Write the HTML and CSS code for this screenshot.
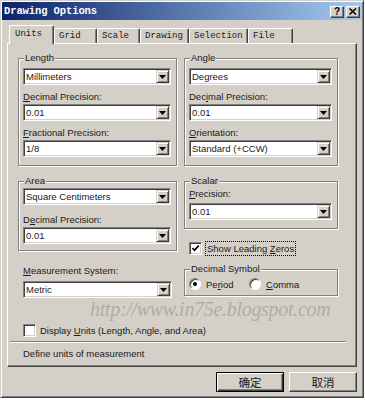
FILE: index.html
```html
<!DOCTYPE html>
<html lang="en">
<head>
    <meta charset="UTF-8">
    <meta name="viewport" content="width=device-width, initial-scale=1.0">
    <title>Drawing Options</title>
    <link rel="stylesheet" href="styles.css">
</head>
<body>

<div class="window">
    <div class="titlebar">
        <span class="title">Drawing Options</span>
        <div class="caption">
            <span class="cap-btn">?</span>
            <span class="cap-btn">
                <svg width="8" height="7" viewBox="0 0 8 7"><path d="M0.5 0.5 L7 6.5 M7 0.5 L0.5 6.5" stroke="#000" stroke-width="1.5"/></svg>
            </span>
        </div>
    </div>

    <div class="tabs">
        <div class="tab active tab-units">Units</div>
        <div class="tab tab-grid">Grid</div>
        <div class="tab tab-scale">Scale</div>
        <div class="tab tab-drawing">Drawing</div>
        <div class="tab tab-selection">Selection</div>
        <div class="tab tab-file">File</div>
    </div>

    <div class="panel">
        <div class="cols">
            <!-- row 1 -->
            <div class="group g-length">
                <div class="group-title">Length</div>
                <div class="combo first"><span class="combo-text">Millimeters</span><span class="combo-btn"><svg width="7" height="4"><polygon points="0,0 7,0 3.5,4" fill="#000"/></svg></span></div>
                <div class="lbl"><u>D</u>ecimal Precision:</div>
                <div class="combo"><span class="combo-text">0.01</span><span class="combo-btn"><svg width="7" height="4"><polygon points="0,0 7,0 3.5,4" fill="#000"/></svg></span></div>
                <div class="lbl"><u>F</u>ractional Precision:</div>
                <div class="combo"><span class="combo-text">1/8</span><span class="combo-btn"><svg width="7" height="4"><polygon points="0,0 7,0 3.5,4" fill="#000"/></svg></span></div>
            </div>
            <div class="group g-angle">
                <div class="group-title">Angle</div>
                <div class="combo first"><span class="combo-text">Degrees</span><span class="combo-btn"><svg width="7" height="4"><polygon points="0,0 7,0 3.5,4" fill="#000"/></svg></span></div>
                <div class="lbl">Dec<u>i</u>mal Precision:</div>
                <div class="combo"><span class="combo-text">0.01</span><span class="combo-btn"><svg width="7" height="4"><polygon points="0,0 7,0 3.5,4" fill="#000"/></svg></span></div>
                <div class="lbl"><u>O</u>rientation:</div>
                <div class="combo"><span class="combo-text">Standard (+CCW)</span><span class="combo-btn"><svg width="7" height="4"><polygon points="0,0 7,0 3.5,4" fill="#000"/></svg></span></div>
            </div>

            <!-- row 2 -->
            <div class="group g-area">
                <div class="group-title">Area</div>
                <div class="combo first"><span class="combo-text">Square Centimeters</span><span class="combo-btn"><svg width="7" height="4"><polygon points="0,0 7,0 3.5,4" fill="#000"/></svg></span></div>
                <div class="lbl lbl-tall">D<u>e</u>cimal Precision:</div>
                <div class="combo"><span class="combo-text">0.01</span><span class="combo-btn"><svg width="7" height="4"><polygon points="0,0 7,0 3.5,4" fill="#000"/></svg></span></div>
            </div>
            <div class="stack">
                <div class="group g-scalar">
                    <div class="group-title">Scalar</div>
                    <div class="lbl lbl-top"><u>P</u>recision:</div>
                    <div class="combo"><span class="combo-text">0.01</span><span class="combo-btn"><svg width="7" height="4"><polygon points="0,0 7,0 3.5,4" fill="#000"/></svg></span></div>
                </div>
                <div class="check check-zeros">
                    <span class="box"><svg width="9" height="9" viewBox="0 0 9 9"><path d="M1.5 4 L3.5 6.2 L7.8 1.6" fill="none" stroke="#000" stroke-width="1.7"/></svg></span>
                    <span class="focus">Show Leading <u>Z</u>eros</span>
                </div>
            </div>

            <!-- row 3 -->
            <div class="measure">
                <div class="lbl lbl-top"><u>M</u>easurement System:</div>
                <div class="combo"><span class="combo-text">Metric</span><span class="combo-btn"><svg width="7" height="4"><polygon points="0,0 7,0 3.5,4" fill="#000"/></svg></span></div>
            </div>
            <div class="group g-decimal">
                <div class="group-title">Decimal Symbol</div>
                <div class="radios">
                    <span class="radio on"></span><span class="radio-lbl">Pe<u>r</u>iod</span>
                    <span class="radio"></span><span class="radio-lbl"><u>C</u>omma</span>
                </div>
            </div>
        </div>

        <div class="check check-units">
            <span class="box"></span>
            <span>Display <u>U</u>nits (Length, Angle, and Area)</span>
        </div>
        <div class="sep"></div>
        <div class="desc">Define units of measurement</div>

        <div class="watermark">http://www.in75e.blogspot.com</div>
    </div>

    <div class="buttons">
        <div class="btn btn-default">确定</div>
        <div class="btn">取消</div>
    </div>
</div>

</body>
</html>
```

FILE: styles.css
```css
body{
    margin: 0;
    background-color: #fff;
    font-family: "Liberation Sans", Arial, sans-serif;
    font-size: 9.5px;
    color: #1a1a1a;
}
u{
    text-decoration-thickness: 1px;
    text-underline-offset: 1px;
}

.window{
    width: 364px;
    height: 398px;
    box-sizing: border-box;
    border: 1px solid;
    border-color: #d4d0c8 #404040 #404040 #d4d0c8;
    box-shadow: inset 1px 1px 0 #fff, inset -1px -1px 0 #808080;
    padding: 1px;
    background-color: #d4d0c8;
}

/* title bar */
.titlebar{
    height: 18px;
    display: flex;
    align-items: center;
    justify-content: space-between;
    padding: 0 2px 0 2px;
    background: linear-gradient(to right, #0a246a, #a6caf0);
}
.title{
    font-family: "Liberation Mono", monospace;
    font-weight: bold;
    font-size: 10.5px;
    color: #fff;
    letter-spacing: -0.1px;
}
.caption{
    display: flex;
    gap: 2px;
    margin-top: 1px;
}
.cap-btn{
    width: 14px;
    height: 12px;
    box-sizing: border-box;
    display: flex;
    align-items: center;
    justify-content: center;
    background-color: #d4d0c8;
    border: 1px solid;
    border-color: #fff #404040 #404040 #fff;
    box-shadow: inset -1px -1px 0 #808080;
    font-family: "Liberation Sans", sans-serif;
    font-weight: bold;
    font-size: 10px;
    line-height: 10px;
    color: #000;
}

/* tabs */
.tabs{
    display: flex;
    align-items: flex-end;
    height: 18px;
    margin: 5px 0 0 7px;
}
.tab{
    position: relative;
    height: 15px;
    box-sizing: border-box;
    border: 1px solid;
    border-bottom: none;
    border-color: #fff #404040 #404040 #fff;
    border-radius: 2px 2px 0 0;
    box-shadow: inset -1px 0 0 #808080;
    padding-left: 4px;
    font-family: "Liberation Mono", monospace;
    font-size: 9px;
    line-height: 14px;
}
.tab.active{
    height: 19px;
    margin-bottom: -1px;
    padding-left: 5px;
    line-height: 17px;
    z-index: 1;
    background-color: #d4d0c8;
}
.tab-units{ width: 45px; }
.tab-grid{ width: 43px; }
.tab-scale{ width: 43px; }
.tab-drawing{ width: 49px; }
.tab-selection{ width: 59px; }
.tab-file{ width: 45px; }

/* tab page */
.panel{
    position: relative;
    width: 350px;
    height: 324px;
    box-sizing: border-box;
    margin-left: 5px;
    border: 1px solid;
    border-color: #fff #404040 #404040 #fff;
    box-shadow: inset -1px -1px 0 #808080;
    padding: 14px 10px 0 10px;
}
.cols{
    display: grid;
    grid-template-columns: 159px 154px;
    column-gap: 7px;
    align-items: start;
}

.group{
    border: 1px solid #808080;
    box-shadow: inset 1px 1px 0 #fff, 1px 1px 0 #fff;
    padding: 0 5px 0 4px;
}
.group-title{
    width: fit-content;
    margin: -7px 0 0 1px;
    padding: 0 1px;
    line-height: 12px;
    background-color: #d4d0c8;
}
.g-length, .g-angle{ padding-bottom: 8px; }
.g-length .first, .g-angle .first{ margin-top: 4px; }
.g-area{
    margin-top: 15px;
    padding-bottom: 6px;
}
.g-area .first{ margin-top: 1px; }
.stack{ margin-top: 15px; }
.g-scalar{ padding-bottom: 8px; }
.g-scalar .combo{ margin-top: 3px; }

.lbl{
    line-height: 12px;
    padding: 6px 0 1px 0;
    white-space: nowrap;
}
.lbl-tall{ padding-top: 9px; }
.lbl-top{ padding: 1px 0 0 0; }

/* combo box */
.combo{
    display: flex;
    height: 17px;
    box-sizing: border-box;
    border: 1px solid;
    border-color: #808080 #fff #fff #808080;
    box-shadow: inset 1px 1px 0 #404040, inset -1px -1px 0 #d4d0c8;
    padding: 1px;
    background-color: #fff;
}
.combo-text{
    flex: 1;
    padding-left: 1px;
    line-height: 13px;
    white-space: nowrap;
}
.combo-btn{
    width: 13px;
    height: 13px;
    box-sizing: border-box;
    display: flex;
    align-items: center;
    justify-content: center;
    background-color: #d4d0c8;
    border: 1px solid;
    border-color: #d4d0c8 #404040 #404040 #d4d0c8;
    box-shadow: inset 1px 1px 0 #fff, inset -1px -1px 0 #808080;
}

/* checkboxes */
.check{
    display: flex;
    align-items: center;
    height: 13px;
    white-space: nowrap;
}
.box{
    width: 13px;
    height: 13px;
    box-sizing: border-box;
    display: flex;
    align-items: center;
    justify-content: center;
    margin-right: 4px;
    background-color: #fff;
    border: 1px solid;
    border-color: #808080 #fff #fff #808080;
    box-shadow: inset 1px 1px 0 #404040, inset -1px -1px 0 #d4d0c8;
}
.check-zeros{
    margin: 13px 0 0 5px;
}
.focus{
    outline: 1px dotted #000;
    outline-offset: 0;
    padding: 0 1px;
    line-height: 13px;
}
.check-units{
    margin: 26px 0 0 5px;
}

/* row 3 */
.measure{
    margin-top: 9px;
    padding-left: 5px;
    padding-right: 5px;
}
.measure .combo{ margin-top: 4px; }
.g-decimal{
    margin-top: 14px;
    padding-bottom: 5px;
}
.radios{
    display: flex;
    align-items: center;
    height: 12px;
    margin-top: 3px;
}
.radio{
    width: 12px;
    height: 12px;
    box-sizing: border-box;
    border-radius: 50%;
    border: 1px solid;
    border-color: #808080 #fff #fff #808080;
    box-shadow: inset 1px 1px 0 #404040;
    background-color: #fff;
    display: flex;
    align-items: center;
    justify-content: center;
}
.radio.on::after{
    content: "";
    width: 4px;
    height: 4px;
    border-radius: 50%;
    background-color: #000;
}
.radio-lbl{
    margin-left: 5px;
    width: 43px;
}

.sep{
    height: 0;
    margin: 4px 0 0 -8px;
    border-top: 1px solid #808080;
    border-bottom: 1px solid #fff;
}
.desc{
    margin: 5px 0 0 5px;
    line-height: 12px;
}

.watermark{
    position: absolute;
    left: 82px;
    top: 255px;
    font-family: "Liberation Serif", serif;
    font-style: italic;
    font-size: 20px;
    line-height: 20px;
    letter-spacing: -0.3px;
    color: rgba(150, 146, 140, 0.6);
    white-space: nowrap;
}

/* dialog buttons */
.buttons{
    display: flex;
    justify-content: flex-end;
    gap: 5px;
    margin-top: 5px;
    padding-right: 5px;
}
.btn{
    width: 68px;
    height: 20px;
    box-sizing: border-box;
    display: flex;
    align-items: center;
    justify-content: center;
    border: 1px solid;
    border-color: #fff #404040 #404040 #fff;
    box-shadow: inset -1px -1px 0 #808080;
    font-family: "Noto Sans CJK SC", sans-serif;
    font-size: 11.5px;
}
.btn-default{
    border: 1px solid #000;
    box-shadow: inset 1px 1px 0 #fff, inset -1px -1px 0 #404040, inset -2px -2px 0 #808080;
}
```
